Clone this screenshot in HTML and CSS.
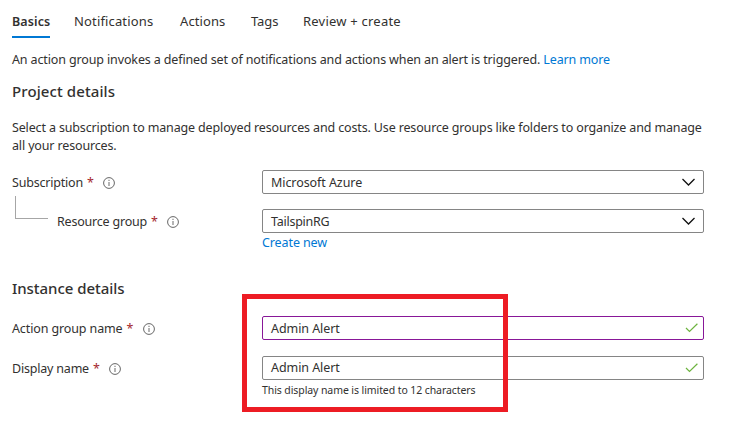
FILE: index.html
```html
<!DOCTYPE html>
<html lang="en">
<head>
<meta charset="utf-8">
<title>Create action group</title>
<link rel="stylesheet" href="styles.css">
</head>
<body>
<svg width="0" height="0" class="defs">
  <symbol id="info" viewBox="0 0 12 12"><circle cx="6" cy="6" r="5.4" fill="none" stroke="#666" stroke-width="1"/><path d="M6 5v4M6 2.8v1.1" stroke="#777" stroke-width="1.1" fill="none"/></symbol>
  <symbol id="chevron" viewBox="0 0 13 8"><path d="M.5 1l6 6 6-6" stroke="#111" stroke-width="1.3" fill="none"/></symbol>
  <symbol id="check" viewBox="0 0 13 10"><path d="M1 5l3.5 3.5L12.4.7" stroke="#6db33f" stroke-width="1.2" fill="none"/></symbol>
</svg>
<nav class="tabs">
  <a class="tab tab-active">Basics</a>
  <a class="tab tab-notifications">Notifications</a>
  <a class="tab tab-actions">Actions</a>
  <a class="tab tab-tags">Tags</a>
  <a class="tab tab-review">Review + create</a>
</nav>
<main class="form">
  <p class="intro">An action group invokes a defined set of notifications and actions when an alert is triggered. <a class="link">Learn more</a></p>
  <h2 class="project-title">Project details</h2>
  <p class="project-text">Select a subscription to manage deployed resources and costs. Use resource groups like folders to organize and manage<br>all your resources.</p>
  <div class="row">
    <div class="label"><span class="name-subscription">Subscription</span><span class="required">*</span><svg class="info"><use href="#info"/></svg></div>
    <div class="field"><span>Microsoft Azure</span><svg class="chevron"><use href="#chevron"/></svg></div>
  </div>
  <div class="row row-child">
    <div class="label"><i class="branch"></i><span class="name-resource">Resource group</span><span class="required">*</span><svg class="info"><use href="#info"/></svg></div>
    <div class="field"><span class="value-rg">TailspinRG</span><svg class="chevron"><use href="#chevron"/></svg></div>
  </div>
  <a class="link create">Create new</a>
  <h2 class="instance-title">Instance details</h2>
  <div class="row">
    <div class="label"><span class="name-action">Action group name</span><span class="required">*</span><svg class="info"><use href="#info"/></svg></div>
    <div class="field field-edited"><span>Admin Alert</span><svg class="check"><use href="#check"/></svg></div>
  </div>
  <div class="row row-display">
    <div class="label"><span class="name-display">Display name</span><span class="required">*</span><svg class="info"><use href="#info"/></svg></div>
    <div class="field"><span class="value-display">Admin Alert</span><svg class="check"><use href="#check"/></svg></div>
  </div>
  <p class="hint">This display name is limited to 12 characters</p>
</main>
<div class="highlight"></div>
</body>
</html>
```
FILE: styles.css
```css
* { box-sizing: border-box; }
body { margin: 0; width: 751px; height: 433px; overflow: hidden; position: relative; background: #fff; color: #323130; font: 12.5px/18px "Noto Sans", "Open Sans", sans-serif; }
p, h2 { margin: 0; }
.defs { position: absolute; }
.tabs { display: flex; height: 38px; padding: 12px 0 0 12px; white-space: nowrap; line-height: 18px; }
.tab { height: 26px; font-size: 13px; }
.tab-active { width: 38px; margin-right: 24px; font-size: 12.5px; font-weight: 600; line-height: 20px; border-bottom: 2px solid #0078d4; }
.tab-active { letter-spacing: .1px; }
.tab-notifications { width: 106px; letter-spacing: .15px; }
.tab-actions { width: 71px; letter-spacing: .1px; }
.tab-tags { width: 52px; letter-spacing: -.1px; }
.tab-review { letter-spacing: .22px; }
.form { display: flex; flex-direction: column; padding: 13px 47px 0 12px; white-space: nowrap; }
.intro { height: 18px; letter-spacing: -.13px; }
.link { color: #0078d4; }
h2 { font-size: 15px; line-height: 20px; font-weight: 500; }
.project-title { margin-top: 12px; letter-spacing: .1px; }
.project-text { margin-top: 18px; letter-spacing: -.145px; }
.row { display: flex; height: 24px; }
.project-text + .row { margin-top: 15px; }
.label { display: flex; align-items: center; width: 250px; padding-top: 2px; position: relative; }
.name-subscription { letter-spacing: -.2px; }
.name-resource { letter-spacing: -.2px; }
.name-action { letter-spacing: -.12px; }
.name-display { letter-spacing: -.2px; }
.required { width: 6px; margin: 0 10px 0 4px; color: #a4262c; }
.info { width: 12px; height: 12px; }
.row-child { margin-top: 15px; }
.row-child .label { padding-left: 45px; }
.branch { position: absolute; left: 3px; top: -13px; width: 33px; height: 23px; border: solid #a6a6a6; border-width: 0 0 1px 1px; }
.field { display: flex; align-items: center; justify-content: space-between; width: 442px; border: 1px solid #858585; border-radius: 2px; padding: 0 5px 0 8px; background: #fff; }
.field span { padding-top: 2px; letter-spacing: -.07px; }
.field .value-rg { letter-spacing: -.25px; }
.field .value-display { padding-top: 0; }
.field-edited { border-color: #881798; }
.chevron { width: 13px; height: 8px; margin-right: 3px; }
.check { width: 13px; height: 10px; }
.create { margin: 1px 0 0 250px; width: 66px; height: 18px; letter-spacing: -.1px; }
.instance-title { margin-top: 26px; letter-spacing: -.05px; }
.instance-title + .row { margin-top: 18px; }
.row-display { margin-top: 16px; }
.hint { margin: 3px 0 0 250px; font-size: 10.5px; line-height: 15px; letter-spacing: -.09px; }
.highlight { position: absolute; left: 242px; top: 294px; width: 266px; height: 118px; border: 5px solid #ed1c24; }
```
